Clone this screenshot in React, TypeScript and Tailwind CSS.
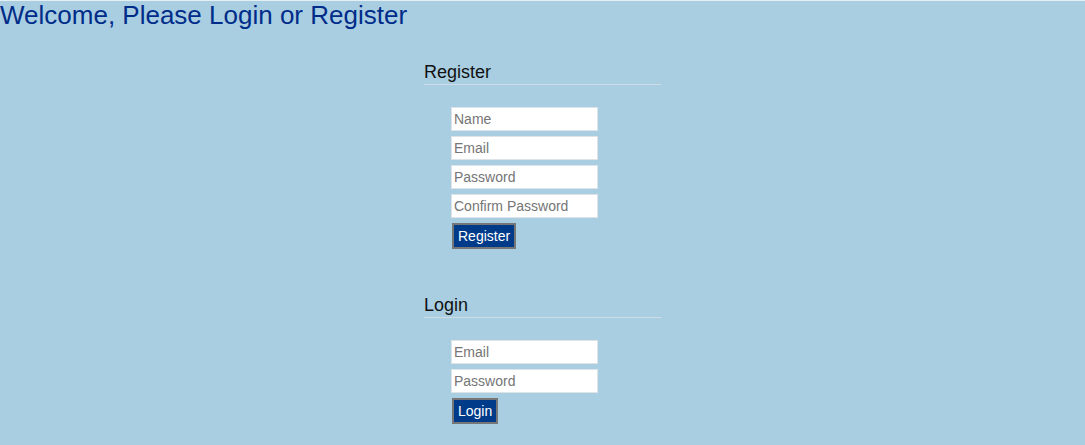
import type { ReactNode } from 'react';

function Field({ label, type, name, autoComplete }: { label: string; type: string; name: string; autoComplete: string }) {
  return (
    <input
      type={type}
      name={name}
      aria-label={label}
      placeholder={label}
      autoComplete={autoComplete}
      className="h-6 w-[147px] border border-[#dde3e7] bg-white px-0.5 text-sm text-black placeholder:text-[#757575]"
    />
  );
}

function FormSection({ title, action, children }: { title: string; action: string; children: ReactNode }) {
  return (
    <section>
      <h2 className="border-b border-[#d0dde4] text-lg leading-6 text-[#111111]">{title}</h2>
      <form className="mt-[22px] flex flex-col items-start gap-[5px] pl-[27px]" onSubmit={(event) => event.preventDefault()}>
        {children}
        <button
          type="submit"
          className="ml-px h-[26px] border-2 border-[#767676] bg-[#003b8a] px-1 text-sm text-white"
        >
          {action}
        </button>
      </form>
    </section>
  );
}

export default function App() {
  return (
    <main className="min-h-screen border-t border-[#e4eff4] bg-[#a9cee2] pb-5 font-['Liberation_Sans',Arial,sans-serif]">
      <h1 className="text-[26px] leading-7 text-[#002c89]">Welcome, Please Login or Register</h1>
      <div className="mx-auto mt-[31px] flex w-[237px] flex-col gap-11">
        <FormSection title="Register" action="Register">
          <Field label="Name" type="text" name="name" autoComplete="name" />
          <Field label="Email" type="email" name="email" autoComplete="email" />
          <Field label="Password" type="password" name="password" autoComplete="new-password" />
          <Field label="Confirm Password" type="password" name="confirm" autoComplete="new-password" />
        </FormSection>
        <FormSection title="Login" action="Login">
          <Field label="Email" type="email" name="loginEmail" autoComplete="email" />
          <Field label="Password" type="password" name="loginPassword" autoComplete="current-password" />
        </FormSection>
      </div>
    </main>
  );
}
